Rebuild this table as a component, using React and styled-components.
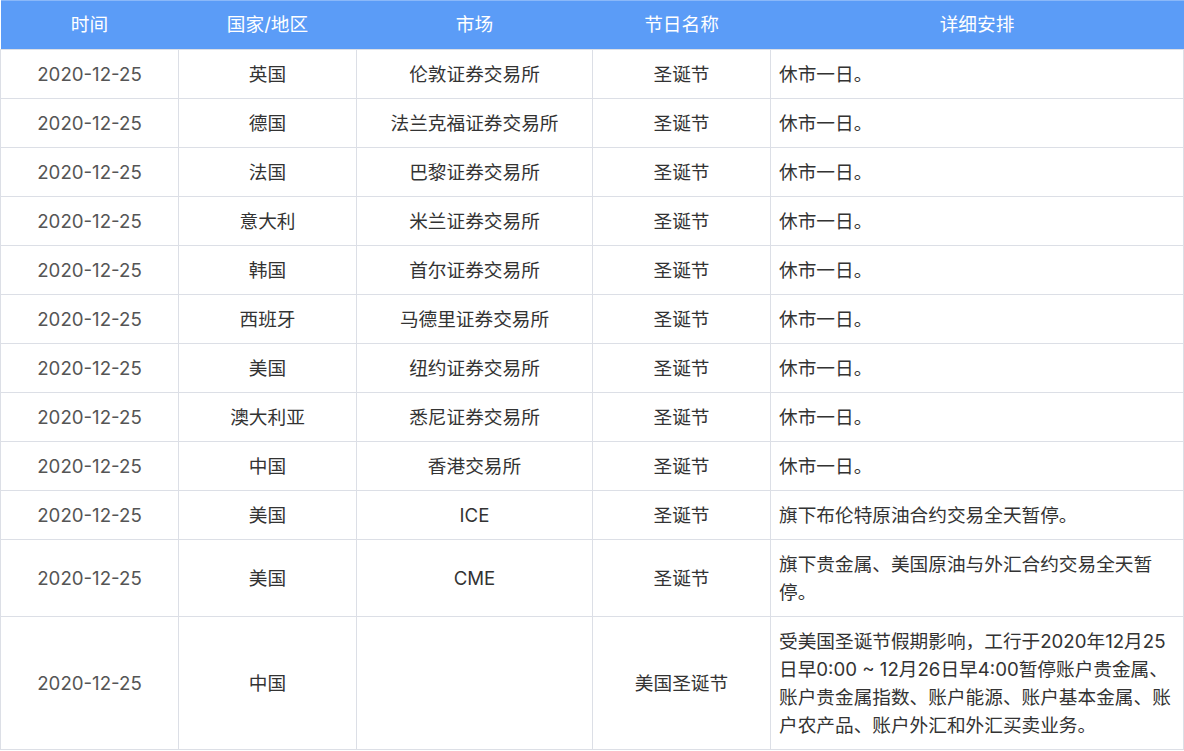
import React from "react";
import styled, { createGlobalStyle } from "styled-components";

const GlobalStyle = createGlobalStyle`
  html, body {
    margin: 0;
    padding: 0;
    background: #fff;
  }
  body {
    font-family: Inter, "Noto Sans CJK SC", "Noto Sans", sans-serif;
  }
`;

const Table = styled.table`
  width: 100%;
  border-collapse: collapse;
  table-layout: fixed;
  font-size: 18.67px;
  line-height: 28px;
  color: #333;
`;

const HeadCell = styled.th`
  background: #5b9cf7;
  color: #fff;
  font-weight: 400;
  height: 48px;
  padding: 0 8px;
  text-align: center;
  border-top: 1px solid #8ab8f9;
`;

const Cell = styled.td`
  border: 1px solid #dcdfe6;
  padding: 11px 8px 9px;
  text-align: ${(p) => (p.$left ? "left" : "center")};
  vertical-align: middle;
  color: ${(p) => (p.$muted ? "#555" : "#333")};
`;

const rows = [
  ["英国", "伦敦证券交易所", "圣诞节", "休市一日。"],
  ["德国", "法兰克福证券交易所", "圣诞节", "休市一日。"],
  ["法国", "巴黎证券交易所", "圣诞节", "休市一日。"],
  ["意大利", "米兰证券交易所", "圣诞节", "休市一日。"],
  ["韩国", "首尔证券交易所", "圣诞节", "休市一日。"],
  ["西班牙", "马德里证券交易所", "圣诞节", "休市一日。"],
  ["美国", "纽约证券交易所", "圣诞节", "休市一日。"],
  ["澳大利亚", "悉尼证券交易所", "圣诞节", "休市一日。"],
  ["中国", "香港交易所", "圣诞节", "休市一日。"],
  ["美国", "ICE", "圣诞节", "旗下布伦特原油合约交易全天暂停。"],
  ["美国", "CME", "圣诞节", "旗下贵金属、美国原油与外汇合约交易全天暂停。"],
  [
    "中国",
    "",
    "美国圣诞节",
    "受美国圣诞节假期影响，工行于2020年12月25日早0:00 ~ 12月26日早4:00暂停账户贵金属、账户贵金属指数、账户能源、账户基本金属、账户农产品、账户外汇和外汇买卖业务。",
  ],
];

export default function App() {
  return (
    <>
      <GlobalStyle />
      <Table>
        <colgroup>
          <col style={{ width: 178 }} />
          <col style={{ width: 178 }} />
          <col style={{ width: 236 }} />
          <col style={{ width: 178 }} />
          <col />
        </colgroup>
        <thead>
          <tr>
            <HeadCell>时间</HeadCell>
            <HeadCell>国家/地区</HeadCell>
            <HeadCell>市场</HeadCell>
            <HeadCell>节日名称</HeadCell>
            <HeadCell>详细安排</HeadCell>
          </tr>
        </thead>
        <tbody>
          {rows.map((r, i) => (
            <tr key={i}>
              <Cell $muted>2020-12-25</Cell>
              <Cell>{r[0]}</Cell>
              <Cell>{r[1]}</Cell>
              <Cell>{r[2]}</Cell>
              <Cell $left>{r[3]}</Cell>
            </tr>
          ))}
        </tbody>
      </Table>
    </>
  );
}
